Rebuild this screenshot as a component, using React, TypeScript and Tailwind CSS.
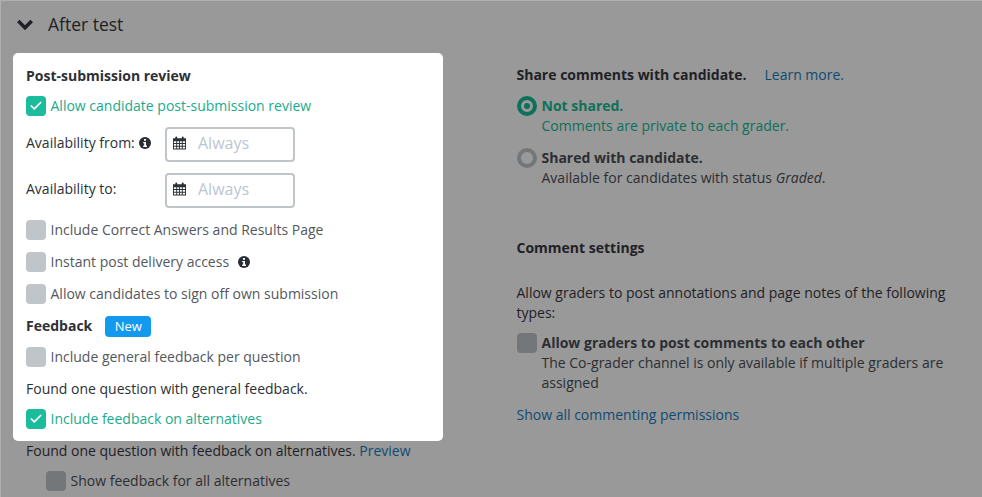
import { Check } from "lucide-react";
import { ReactNode } from "react";

function Info() {
  return (
    <svg viewBox="0 0 12 12" className="w-3 h-3 shrink-0">
      <circle cx="6" cy="6" r="6" fill="#2a2d33" />
      <rect x="5" y="2" width="2" height="1.8" fill="#fff" />
      <path d="M4.2 5h2.8v3.6h1V10H4.2V8.6h1V6.300h-1z" fill="#fff" />
    </svg>
  );
}

function Calendar() {
  return (
    <svg viewBox="0 0 14 14" className="w-[13px] h-[14px] shrink-0" fill="#2d3035">
      <rect x="2.500" y="0" width="2" height="3.500" rx="1" />
      <rect x="9.500" y="0" width="2" height="3.500" rx="1" />
      <path
        fillRule="evenodd"
        d="M0 2h14v12H0zM1 5v2h2.500V5zM4.500 5v2h2V5zM7.500 5v2h2V5zM10.500 5v2H13V5zM1 8v2h2.500V8zM4.500 8v2h2V8zM7.500 8v2h2V8zM10.500 8v2H13V8zM1 11v2h2.500v-2zM4.500 11v2h2v-2zM7.500 11v2h2v-2zM10.500 11v2H13v-2z"
      />
    </svg>
  );
}

function Box({ on, dim }: { on?: boolean; dim?: boolean }) {
  if (on) {
    return (
      <span className="w-5 h-5 rounded-[4px] bg-[#1abc9c] flex items-center justify-center shrink-0">
        <Check className="w-3.5 h-3.5 text-white" strokeWidth={3} />
      </span>
    );
  }
  return <span className={`w-5 h-5 rounded-[4px] shrink-0 ${dim ? "bg-[#74777a]" : "bg-[#c0c5c9]"}`} />;
}

function Row({ on, children }: { on?: boolean; children: ReactNode }) {
  return (
    <div className={`flex items-center gap-[5px] h-5 -ml-[0.5px] ${on ? "text-[#1aaa8c]" : "text-[#54585e]"}`}>
      <Box on={on} />
      {children}
    </div>
  );
}

function DateField() {
  return (
    <div className="w-[130px] h-[35px] mt-[2px] pb-[4px] self-start rounded-[4px] border-2 border-[#c0c5c9] flex items-center pl-[6px] gap-[12px] text-[#bcc6d0] text-[16px]">
      <Calendar />
      Always
    </div>
  );
}

function Heading({ children }: { children: ReactNode }) {
  return <span className="font-bold text-[#2d3035]">{children}</span>;
}

export default function App() {
  return (
    <div
      className="w-[982px] h-[497px] overflow-hidden bg-[#999999] border-t border-l border-[#b0b0b0] text-[14px] leading-5 text-[#1f2126]"
      style={{ fontFamily: '"Open Sans", sans-serif' }}
    >
      <div className="flex items-center h-[46px] pl-[16px] text-[#1f2126]">
        <svg viewBox="0 0 16 11" className="w-4 h-[11px]" fill="none" stroke="currentColor" strokeWidth="3.6">
          <path d="M1.300 2l6.700 6.700L14.700 2" />
        </svg>
        <span className="ml-[15px] text-[17.5px]">After test</span>
      </div>
      <div className="flex items-start mt-[6px]">
        <div className="w-[442px] shrink-0 ml-[12px]">
          <div className="w-[430px] h-[388px] rounded-[5px] bg-white pl-[13px] pt-[13px]">
            <div className="h-5">
              <Heading>Post-submission review</Heading>
            </div>
            <div className="mt-[10px]">
              <Row on>Allow candidate post-submission review</Row>
            </div>
            <div className="flex items-center mt-[9px] h-[36px] text-[#2d3035]">
              <span className="w-[113px]">Availability from:</span>
              <Info />
              <span className="w-[14px]" />
              <DateField />
            </div>
            <div className="flex items-center mt-[10px] h-[36px] text-[#2d3035]">
              <span className="w-[139px]">Availability to:</span>
              <DateField />
            </div>
            <div className="mt-[13px]">
              <Row>Include Correct Answers and Results Page</Row>
            </div>
            <div className="mt-[12px]">
              <Row>
                Instant post delivery access
                <span className="ml-[4px]">
                  <Info />
                </span>
              </Row>
            </div>
            <div className="mt-[12px]">
              <Row>Allow candidates to sign off own submission</Row>
            </div>
            <div className="flex items-center mt-[12px] h-5">
              <Heading>Feedback</Heading>
              <span className="ml-[13px] w-[46px] h-[21px] rounded-[4px] bg-[#1399ee] text-white text-[13px] flex items-center justify-center">
                New
              </span>
            </div>
            <div className="mt-[11px]">
              <Row>Include general feedback per question</Row>
            </div>
            <div className="mt-[12px] h-5 text-[#2d3035]">Found one question with general feedback.</div>
            <div className="mt-[10px]">
              <Row on>Include feedback on alternatives</Row>
            </div>
          </div>
          <div className="pl-[13px] mt-[0px] h-5">
            Found one question with feedback on alternatives.{" "}
            <span className="text-[#0f4a73]">Preview</span>
          </div>
          <div className="flex items-center gap-[5px] ml-[32.500px] mt-[10px] text-[#2c2e32]">
            <Box dim />
            Show feedback for all alternatives
          </div>
        </div>
        <div className="ml-[61.500px] w-[440px] pt-[12px]">
          <div className="h-5">
            <span className="font-bold">Share comments with candidate.</span>
            <span className="ml-[18px] text-[#0f4a73]">Learn more.</span>
          </div>
          <div className="flex gap-[5px] mt-[11px]">
            <span className="w-5 h-5 rounded-full border-[4px] border-[#0d7059] flex items-center justify-center shrink-0">
              <span className="w-1.5 h-1.5 rounded-full bg-[#0d7059]" />
            </span>
            <div className="text-[#0d7059]">
              <div className="font-bold">Not shared.</div>
              <div>Comments are private to each grader.</div>
            </div>
          </div>
          <div className="flex gap-[5px] mt-[12px]">
            <span className="w-5 h-5 rounded-full border-[4px] border-[#74777a] shrink-0" />
            <div className="text-[#2c2e32]">
              <div className="font-bold">Shared with candidate.</div>
              <div>
                Available for candidates with status <em>Graded</em>.
              </div>
            </div>
          </div>
          <div className="mt-[50px] h-5 font-bold">Comment settings</div>
          <div className="mt-[25px] w-[440px]">
            Allow graders to post annotations and page notes of the following types:
          </div>
          <div className="flex gap-[5px] mt-[10px]">
            <Box dim />
            <div className="text-[#2c2e32]">
              <div className="font-bold">Allow graders to post comments to each other</div>
              <div>The Co-grader channel is only available if multiple graders are assigned</div>
            </div>
          </div>
          <div className="mt-[12px] text-[#0f4a73]">Show all commenting permissions</div>
        </div>
      </div>
    </div>
  );
}
